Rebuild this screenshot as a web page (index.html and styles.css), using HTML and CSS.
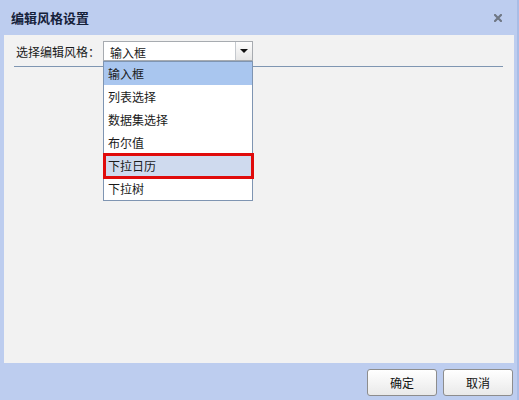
FILE: index.html
```html
<!DOCTYPE html>
<html lang="zh-CN">

<head>
    <meta charset="UTF-8">
    <meta name="viewport" content="width=device-width, initial-scale=1.0">
    <title>编辑风格设置</title>
    <link rel="stylesheet" href="styles.css">
</head>

<body>
    <div class="dialog">
        <div class="title-bar">
            <span class="title">编辑风格设置</span>
            <svg class="close-btn" width="8" height="8" viewBox="0 0 8 8">
                <path d="M1 1 L7 7 M7 1 L1 7" stroke="#6f7784" stroke-width="2.2" stroke-linecap="square" />
            </svg>
        </div>

        <div class="content">
            <div class="form-row">
                <label class="field-label">选择编辑风格：</label>
                <div class="combo">
                    <div class="combo-text">输入框</div>
                    <div class="combo-arrow"></div>

                    <!-- 下拉列表 -->
                    <ul class="combo-list">
                        <li class="item selected">输入框</li>
                        <li class="item">列表选择</li>
                        <li class="item">数据集选择</li>
                        <li class="item">布尔值</li>
                        <li class="item hover">下拉日历</li>
                        <li class="item">下拉树</li>
                    </ul>
                </div>
            </div>
            <div class="divider"></div>
        </div>

        <div class="footer">
            <button class="btn">确定</button>
            <button class="btn">取消</button>
        </div>
    </div>
</body>

</html>
```

FILE: styles.css
```css
body {
    margin: 0;
    background-color: #bdcdef;
    font-family: "Noto Sans CJK SC", "DejaVu Sans", sans-serif;
    font-size: 12px;
    color: #1a1a1a;
}

.dialog {
    width: 519px;
    height: 400px;
    display: flex;
    flex-direction: column;
    background-color: #bdcdef;
    border-right: 2px solid #a9bde6;
    box-sizing: border-box;
}

.title-bar {
    height: 35px;
    display: flex;
    align-items: center;
    justify-content: space-between;
    padding: 0 15px 0 11px;
}

.title {
    font-size: 13px;
    font-weight: bold;
    color: #15213a;
}

.close-btn {
    display: block;
}

.content {
    height: 328px;
    margin-left: 4px;
    width: 510px;
    background-color: #f2f2f2;
    padding: 6px 11px 0 10px;
    box-sizing: border-box;
}

.form-row {
    display: flex;
    align-items: center;
    height: 20px;
}

.field-label {
    width: 87px;
    padding-left: 2px;
}

.combo {
    position: relative;
    display: flex;
    width: 150px;
    height: 20px;
    border: 1px solid #a7abb0;
    box-sizing: border-box;
    background-color: #ffffff;
}

.combo-text {
    flex: 1;
    padding: 2px 4px 0 6px;
    line-height: 17px;
}

.combo-arrow {
    width: 16px;
    border-left: 1px solid #c5c9ce;
    background: linear-gradient(#fdfdfd, #e6e6e6);
    position: relative;
}

.combo-arrow::after {
    content: "";
    position: absolute;
    left: 4px;
    top: 7px;
    border-left: 4px solid transparent;
    border-right: 4px solid transparent;
    border-top: 4px solid #111111;
}

/* 下拉列表 */
.combo-list {
    position: absolute;
    left: -1px;
    top: 19px;
    width: 150px;
    margin: 0;
    padding: 0;
    list-style: none;
    background-color: #ffffff;
    border: 1px solid #7f95b2;
    box-sizing: border-box;
}

.item {
    height: 23px;
    line-height: 23px;
    padding-left: 4px;
    box-sizing: border-box;
}

.item.selected {
    background-color: #a9c6ef;
}

.item.hover {
    background-color: #cfdaee;
    border: 3px solid #e00b0b;
    margin: -1px -2px -2px -1px;
    height: 26px;
    line-height: 20px;
    padding-left: 2px;
}

.divider {
    margin-top: 5px;
    height: 1px;
    width: 489px;
    background-color: #7f96b2;
}

.footer {
    flex: 1;
    display: flex;
    justify-content: flex-end;
    align-items: flex-start;
    gap: 6px;
    padding: 6px 4px 0 0;
}

.btn {
    width: 70px;
    height: 27px;
    font-family: "Noto Sans CJK SC", "DejaVu Sans", sans-serif;
    font-size: 12px;
    color: #111111;
    border: 1px solid #8d8d8d;
    border-radius: 3px;
    background: linear-gradient(#ffffff, #e9e9e9);
    padding: 0;
}
```
